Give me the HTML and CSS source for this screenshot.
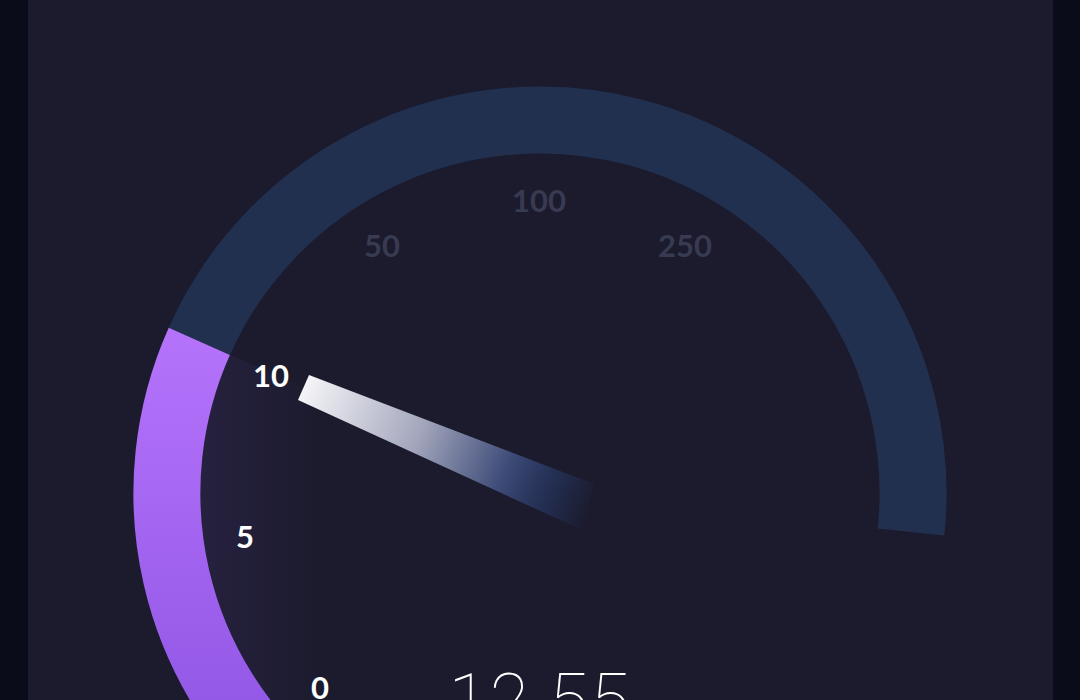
FILE: index.html
```html
<!DOCTYPE html>
<html lang="en">
<head>
    <meta charset="UTF-8">
    <meta name="viewport" content="width=device-width, initial-scale=1.0">
    <title>Speed Test</title>
    <link rel="stylesheet" href="styles.css">
</head>
<body>
    <div class="panel">
        <svg class="gauge" viewBox="28 0 1025 700" width="1025" height="700">
            <defs>
                <linearGradient id="purpleGrad" gradientUnits="userSpaceOnUse" x1="0" y1="330" x2="0" y2="700">
                    <stop offset="0" stop-color="#b573fb"/>
                    <stop offset="1" stop-color="#9459e7"/>
                </linearGradient>
                <linearGradient id="glowGrad" gradientUnits="userSpaceOnUse" x1="200" y1="0" x2="325" y2="0">
                    <stop offset="0" stop-color="#8a55e0" stop-opacity="0.1"/>
                    <stop offset="1" stop-color="#8a55e0" stop-opacity="0"/>
                </linearGradient>
                <linearGradient id="needleGrad" gradientUnits="userSpaceOnUse" x1="303" y1="388" x2="592" y2="508">
                    <stop offset="0" stop-color="#f5f5f8"/>
                    <stop offset="0.4" stop-color="#a3a6bc"/>
                    <stop offset="0.7" stop-color="#3d4b78"/>
                    <stop offset="0.85" stop-color="#26355f" stop-opacity="0.75"/>
                    <stop offset="1" stop-color="#26355f" stop-opacity="0"/>
                </linearGradient>
            </defs>

            <!-- glow inside the filled part -->
            <path d="M540 493 L230 355 A339 339 0 0 0 322 753 Z" fill="url(#glowGrad)"/>

            <!-- track -->
            <path class="track" d="M199.3 341.3 A373 373 0 0 1 911 532"/>
            <!-- filled part -->
            <path class="fill" d="M300 779 A373 373 0 0 1 199.3 341.3"/>

            <!-- needle -->
            <polygon points="309,375 298,400 584,531 594,484" fill="url(#needleGrad)"/>

            <!-- scale -->
            <text class="label active" x="271" y="387">10</text>
            <text class="label active" x="245" y="548">5</text>
            <text class="label active" x="320" y="699">0</text>
            <text class="label" x="382" y="257">50</text>
            <text class="label" x="539" y="212">100</text>
            <text class="label" x="685" y="257">250</text>

            <text class="speed" x="540" y="725">12.55</text>
        </svg>
    </div>
</body>
</html>
```

FILE: styles.css
```css
body{
    margin: 0;
    background-color: #0a0c1a;
    overflow: hidden;
}
.panel{
    margin: 0 27px 0 28px;
    height: 700px;
    background-color: #1b1b2d;
    display: flex;
}
.gauge{
    display: block;
    overflow: hidden;
}
.track{
    fill: none;
    stroke: #22304f;
    stroke-width: 67;
}
.fill{
    fill: none;
    stroke: url(#purpleGrad);
    stroke-width: 67;
}
.label{
    font-family: Lato, "Open Sans", sans-serif;
    font-weight: 700;
    font-size: 31px;
    fill: #383a51;
    text-anchor: middle;
}
.label.active{
    fill: #ffffff;
}
.speed{
    font-family: Roboto, "Liberation Sans", sans-serif;
    font-weight: 100;
    font-size: 72px;
    letter-spacing: 2px;
    fill: #ffffff;
    text-anchor: middle;
}
```
